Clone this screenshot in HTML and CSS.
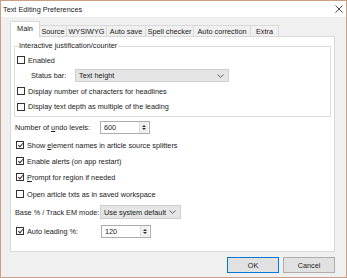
FILE: index.html
```html
<!DOCTYPE html>
<html lang="en">
<head>
    <meta charset="UTF-8">
    <title>Text Editing Preferences</title>
    <link rel="stylesheet" href="styles.css">
</head>
<body>
    <div class="window">
        <div class="titlebar">
            <span class="title">Text Editing Preferences</span>
            <svg class="close" width="8" height="8" viewBox="0 0 8 8"><path d="M0.5 0.5L7.5 7.5M7.5 0.5L0.5 7.5" stroke="#333" stroke-width="0.9"/></svg>
        </div>
        <div class="content">
            <div class="tabs">
                <div class="tab active t-main">Main</div>
                <div class="tab t-source">Source</div>
                <div class="tab t-wys">WYSIWYG</div>
                <div class="tab t-autosave">Auto save</div>
                <div class="tab t-spell">Spell checker</div>
                <div class="tab t-autocorr">Auto correction</div>
                <div class="tab t-extra">Extra</div>
            </div>
            <div class="panel">
                <fieldset class="group">
                    <legend>Interactive justification/counter</legend>
                    <div class="row r-enabled"><span class="check"></span><span>Enabled</span></div>
                    <div class="row r-status">
                        <span class="status-label">Status bar:</span>
                        <div class="select status-select"><span>Text height</span><svg class="chev" width="7" height="4" viewBox="0 0 7 4"><path d="M0.5 0.5L3.5 3.3L6.5 0.5" fill="none" stroke="#555" stroke-width="0.9"/></svg></div>
                    </div>
                    <div class="row r-num"><span class="check"></span><span>Display number of characters for headlines</span></div>
                    <div class="row r-depth"><span class="check"></span><span>Display text depth as multiple of the leading</span></div>
                </fieldset>

                <div class="row r-undo">
                    <span class="field-label">Number of <u>u</u>ndo levels:</span>
                    <div class="spin"><span>600</span><span class="spin-btns"><span class="up"></span><span class="down"></span></span></div>
                </div>
                <div class="row r-opt r-show"><span class="check on"></span><span>Show <u>e</u>lement names in article source splitters</span></div>
                <div class="row r-opt"><span class="check on"></span><span>Enable alerts (on app restart)</span></div>
                <div class="row r-opt"><span class="check on"></span><span><u>P</u>rompt for region if needed</span></div>
                <div class="row r-opt r-open"><span class="check"></span><span>Open article txts as in saved workspace</span></div>
                <div class="row r-base">
                    <span class="field-label">Base % / Track EM mode:</span>
                    <div class="select base-select"><span>Use system default</span><svg class="chev" width="7" height="4" viewBox="0 0 7 4"><path d="M0.5 0.5L3.5 3.3L6.5 0.5" fill="none" stroke="#555" stroke-width="0.9"/></svg></div>
                </div>
                <div class="row r-opt r-lead">
                    <span class="check on"></span><span class="lead-label">Auto leading %:</span>
                    <div class="spin"><span>120</span><span class="spin-btns"><span class="up"></span><span class="down"></span></span></div>
                </div>
            </div>
            <div class="footer">
                <button class="btn default">OK</button>
                <button class="btn">Cancel</button>
            </div>
        </div>
    </div>
</body>
</html>
```
FILE: styles.css
```css
html, body {
    margin: 0;
    height: 100%;
}
body {
    font-family: "Liberation Sans", Arial, sans-serif;
    font-size: 7.3px;
    color: #1a1a1a;
    background: #f0f0f0;
    white-space: nowrap;
}
.window {
    height: 100%;
    box-sizing: border-box;
    border: 1px solid #c9a086;
    background: #f0f0f0;
    display: flex;
    flex-direction: column;
}
.titlebar {
    height: 16px;
    background: white;
    display: flex;
    align-items: center;
    justify-content: space-between;
    padding: 0 3px 0 2px;
}
.content {
    flex: 1;
    padding: 4px 11px 0 9px;
    display: flex;
    flex-direction: column;
}
.tabs {
    display: flex;
    align-items: flex-end;
    height: 16px;
    margin-bottom: -1px;
    position: relative;
    z-index: 1;
}
.tab {
    height: 12px;
    line-height: 11px;
    box-sizing: border-box;
    border: 1px solid #d9d9d9;
    border-left: none;
    background: #f0f0f0;
    text-align: center;
}
.tab.active {
    height: 16px;
    line-height: 14px;
    background: white;
    border-left: 1px solid #d9d9d9;
    border-bottom: none;
}
.t-main { width: 30px; }
.t-source { width: 27px; }
.t-wys { width: 40px; }
.t-autosave { width: 39px; }
.t-spell { width: 48px; }
.t-autocorr { width: 57px; }
.t-extra { width: 28px; }

.panel {
    height: 216px;
    box-sizing: border-box;
    background: white;
    border: 1px solid #d9d9d9;
    padding: 4px 3px 0 3px;
}
.group {
    margin: 0;
    padding: 1px 2px 2px 2px;
    border: 1px solid #dcdcdc;
}
.group legend {
    padding: 0 1px;
    margin-left: 1px;
    line-height: 10px;
}
.row {
    display: flex;
    align-items: center;
    height: 16px;
}
.r-status, .r-depth {
    height: 15px;
}
.check {
    flex: none;
    width: 8px;
    height: 8px;
    box-sizing: border-box;
    border: 1px solid #333;
    background: white;
    margin-right: 3px;
    position: relative;
}
.check.on::after {
    content: "";
    position: absolute;
    left: 1.5px;
    top: -0.5px;
    width: 2px;
    height: 4px;
    border: solid #333;
    border-width: 0 1px 1px 0;
    transform: rotate(40deg);
}
.status-label {
    width: 44px;
    margin-left: 14px;
}
.select {
    height: 13px;
    box-sizing: border-box;
    background: #e5e5e5;
    border: 1px solid #d0d0d0;
    display: flex;
    align-items: center;
    justify-content: space-between;
    padding: 0 4px 0 3px;
}
.status-select {
    width: 154px;
}
.r-undo {
    margin-top: 2px;
    padding-left: 1px;
}
.field-label {
    width: 85px;
}
.spin {
    width: 50px;
    height: 13px;
    box-sizing: border-box;
    border: 1px solid #adadad;
    display: flex;
    align-items: center;
    justify-content: space-between;
    padding-left: 3px;
}
.spin-btns {
    display: flex;
    flex-direction: column;
    justify-content: center;
    align-items: center;
    gap: 1px;
    width: 8px;
    height: 11px;
    margin-right: 1px;
    background: #f0f0f0;
    border-left: 1px solid #ddd;
}
.spin-btns .up {
    border-left: 2px solid transparent;
    border-right: 2px solid transparent;
    border-bottom: 2px solid #333;
}
.spin-btns .down {
    border-left: 2px solid transparent;
    border-right: 2px solid transparent;
    border-top: 2px solid #333;
}
.r-opt {
    padding-left: 2px;
}
.r-show {
    margin-top: 2px;
}
.r-open {
    margin-top: 1px;
}
.r-base {
    height: 18px;
    margin-top: 1px;
    padding-left: 1px;
}
.base-select {
    width: 81px;
    height: 14px;
}
.r-lead {
    margin-top: 2px;
}
.lead-label {
    width: 74px;
}
.footer {
    flex: 1;
    display: flex;
    justify-content: flex-end;
    align-items: flex-start;
    gap: 4px;
    padding-top: 5px;
}
.btn {
    width: 52px;
    height: 16px;
    font-family: inherit;
    font-size: 7.3px;
    color: #1a1a1a;
    background: #e1e1e1;
    border: 1px solid #adadad;
    padding: 0;
}
.btn.default {
    border-color: #0078d7;
}
```
